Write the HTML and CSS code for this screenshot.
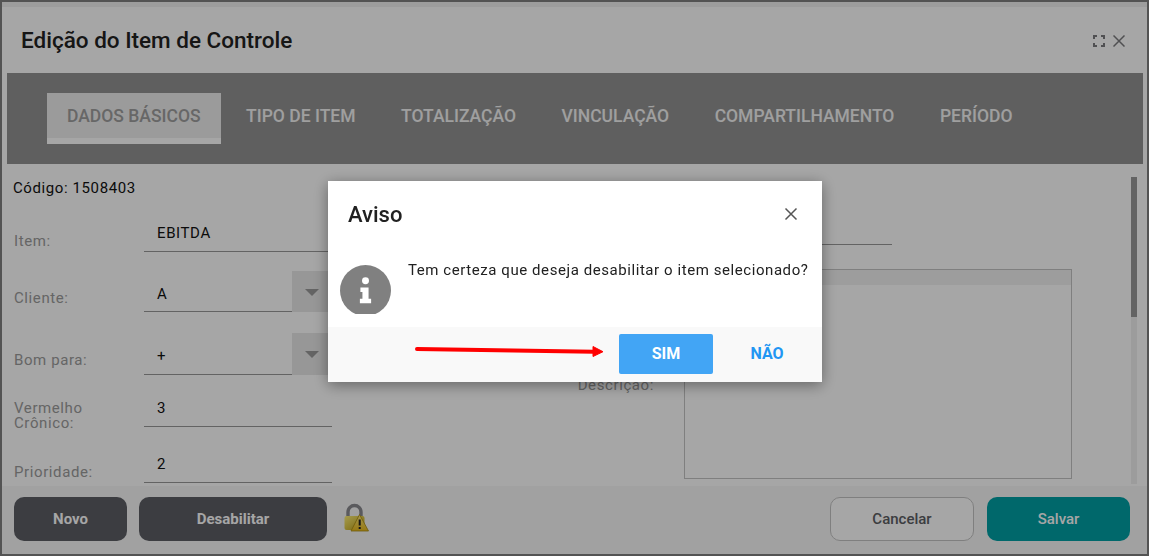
FILE: index.html
```html
<!DOCTYPE html>
<html lang="pt">
<head>
<meta charset="utf-8">
<title>Edição do Item de Controle</title>
<link rel="stylesheet" href="styles.css">
</head>
<body>
<div class="window">
  <header class="win-head">
    <h1 class="win-title">Edição do Item de Controle</h1>
    <div class="win-tools">
      <svg class="tool" width="12" height="12" viewBox="0 0 12 12"><path d="M1 4V1h3M8 1h3v3M11 8v3H8M4 11H1V8" fill="none" stroke="#7b7b7f" stroke-width="2"/></svg>
      <svg class="tool" width="12" height="12" viewBox="0 0 12 12"><path d="M.5.5l11 11M11.500.5l-11 11" fill="none" stroke="#7b7b7f" stroke-width="1.500"/></svg>
    </div>
  </header>
  <nav class="tabs">
    <a class="tab active">DADOS BÁSICOS</a>
    <a class="tab">TIPO DE ITEM</a>
    <a class="tab">TOTALIZAÇÃO</a>
    <a class="tab">VINCULAÇÃO</a>
    <a class="tab">COMPARTILHAMENTO</a>
    <a class="tab">PERÍODO</a>
  </nav>
  <main class="content">
    <div class="form">
      <div class="col-left">
        <div class="code">Código: 1508403</div>
        <div class="row row-item"><label class="lbl">Item:</label><div class="field">EBITDA</div></div>
        <div class="row row-client"><label class="lbl">Cliente:</label><div class="field field-select">A</div><div class="drop"><i class="caret"></i></div></div>
        <div class="row row-good"><label class="lbl">Bom para:</label><div class="field field-select">+</div><div class="drop"><i class="caret"></i></div></div>
        <div class="row row-red"><label class="lbl lbl-two">Vermelho Crônico:</label><div class="field">3</div></div>
        <div class="row row-prio"><label class="lbl">Prioridade:</label><div class="field">2</div></div>
      </div>
      <div class="col-right">
        <div class="field-right"></div>
        <div class="desc-row">
          <label class="lbl lbl-desc">Descrição:</label>
          <div class="editor"><div class="editor-bar"></div></div>
        </div>
      </div>
    </div>
    <div class="scroll"><div class="thumb"></div></div>
  </main>
  <footer class="win-foot">
    <button class="btn btn-dark btn-new">Novo</button>
    <button class="btn btn-dark btn-dis">Desabilitar</button>
    <svg class="lock" width="26" height="30" viewBox="0 0 26 30">
      <defs>
        <linearGradient id="body" x1="0" y1="0" x2="1" y2="1"><stop offset="0" stop-color="#fff07a"/><stop offset="1" stop-color="#b89a10"/></linearGradient>
        <linearGradient id="warn" x1="0" y1="0" x2="0" y2="1"><stop offset="0" stop-color="#ffe97a"/><stop offset="1" stop-color="#e8b91c"/></linearGradient>
      </defs>
      <path d="M5 14V9a6.500 6.500 0 0 1 13 0v5" fill="none" stroke="#8a8a90" stroke-width="3.400"/>
      <rect x="1.500" y="13" width="20" height="14" rx="2" fill="url(#body)"/>
      <path d="M16.500 11.500L25.500 28H8z" fill="url(#warn)" stroke="#a88c10" stroke-width=".8"/>
      <path d="M16.700 16.500v6M16.700 24v2" stroke="#222" stroke-width="2"/>
    </svg>
    <div class="foot-gap"></div>
    <button class="btn btn-ghost">Cancelar</button>
    <button class="btn btn-save">Salvar</button>
  </footer>
</div>

<div class="overlay"></div>

<section class="modal">
  <div class="modal-head">
    <h2 class="modal-title">Aviso</h2>
    <svg width="14" height="14" viewBox="0 0 14 14"><path d="M1.500 1.500l11 11M12.500 1.500l-11 11" fill="none" stroke="#555" stroke-width="1.500"/></svg>
  </div>
  <div class="modal-body">
    <div class="info">
      <svg width="51" height="51" viewBox="0 0 50 50">
        <circle cx="25" cy="25" r="25" fill="#808080"/>
        <circle cx="25" cy="15.500" r="3.400" fill="#fff"/>
        <path d="M20 22h8v11h2.500v4.500h-11V33H22v-6.500h-2z" fill="#fff"/>
      </svg>
    </div>
    <p class="modal-text">Tem certeza que deseja desabilitar o item selecionado?</p>
  </div>
  <div class="modal-foot">
    <button class="m-btn m-yes">SIM</button>
    <button class="m-btn m-no">NÃO</button>
  </div>
</section>

<svg class="arrow" width="192" height="16" viewBox="0 0 192 16">
  <path d="M4 5L181 7.700" stroke="#f00" stroke-width="4" stroke-linecap="round"/>
  <path d="M180 2.500L190 7.700L180 12.500z" fill="#f00" stroke="#f00" stroke-linejoin="round"/>
</svg>
</body>
</html>
```
FILE: styles.css
```css
* { box-sizing: border-box; }
html, body { margin: 0; height: 100%; overflow: hidden; }
body { font-family: Roboto, "Liberation Sans", sans-serif; background: #fff; color: #000; }

.window {
  width: 1149px; height: 556px;
  border: 2px solid #808080;
  display: flex; flex-direction: column;
  background: #fff;
}
.win-head {
  height: 71px;
  display: flex; align-items: center; justify-content: space-between;
  padding: 5px 22px 0 19px;
  background: linear-gradient(#f2f2f2 0, #f2f2f2 5px, #fff 5px);
}
.win-title { margin: 0; font-size: 22.500px; font-weight: 500; color: #222; line-height: 28px; position: relative; top: 0; }
.win-tools { display: flex; gap: 8px; position: relative; top: 1px; }
.tool { display: block; }

.tabs {
  margin: 0 4px 0 5px;
  height: 91px;
  background: #939393;
  display: flex; align-items: flex-start;
  padding: 20px 0 0 40px;
  gap: 5.500px;
}
.tab {
  height: 51px;
  padding: 12px 20px 0;
  font-size: 17.500px; font-weight: 500; line-height: 22px;
  color: #f5f5f5;
}
.tab.active { background: #eee; border-bottom: 6px solid #fff; color: #9e9e9e; }

.content {
  flex: 1; min-height: 0;
  display: flex;
  padding: 0 10px 0 5px;
  overflow: hidden;
}
.form { flex: 1; display: flex; min-width: 0; overflow: hidden; }
.col-left { width: 325px; padding-left: 6px; flex: none; }
.code { font-size: 15px; line-height: 18px; margin-top: 15px; color: #111; letter-spacing: .6px; }
.row { display: flex; position: relative; }
.lbl { width: 130px; margin-left: 1px; flex: none; font-size: 15px; line-height: 16px; color: #9c9c9c; letter-spacing: .6px; }
.lbl-two { padding-right: 40px; line-height: 15px; }
.field {
  flex: 1; border-bottom: 1px solid #999;
  font-size: 15px; line-height: 18px; padding: 0 13px;
  color: #111; letter-spacing: .6px;
}
.field-select { flex: none; width: 148px; }
.drop { width: 40px; background: #e8e8e8; display: flex; justify-content: center; padding-top: 18px; flex: none; }
.caret { width: 0; height: 0; border-left: 7.500px solid transparent; border-right: 7.500px solid transparent; border-top: 7px solid #9a9a9a; }

.row-item { margin-top: 22px; height: 33px; }
.row-item .lbl { padding-top: 14px; }
.row-item .field { padding-top: 5px; }
.row-client { margin-top: 19px; height: 41px; }
.row-client .lbl { padding-top: 19px; }
.row-client .field { padding-top: 14px; }
.row-good { margin-top: 21px; height: 42px; }
.row-good .lbl { padding-top: 19px; }
.row-good .field { padding-top: 14px; }
.row-red { margin-top: 21px; height: 31px; }
.row-red .lbl { padding-top: 4.500px; }
.row-red .field { padding-top: 3px; }
.row-prio { margin-top: 24px; height: 32px; }
.row-prio .lbl { padding-top: 13px; }
.row-prio .field { padding-top: 4px; }

.col-right { flex: 1; position: relative; }
.field-right { width: 325px; margin-left: 235px; height: 81px; border-bottom: 1px solid #999; }
.desc-row { display: flex; margin-top: 24px; margin-left: 214px; }
.lbl-desc { width: 107px; text-align: right; padding-top: 108px; }
.editor { width: 388px; height: 210px; border: 1px solid #c4c4c4; margin-left: 30px; }
.editor-bar { height: 15px; background: #f1f1f1; }

.scroll { width: 6px; flex: none; margin: 13px 0 2px; background: #f0f0f0; }
.thumb { height: 140px; background: #999; }

.win-foot {
  height: 68px; flex: none;
  display: flex; align-items: flex-start;
  padding: 11px 17px 0 12px;
  background: #f8f8f8;
}
.btn {
  height: 44px; border: 0; border-radius: 10px;
  font-family: inherit; font-size: 15px; font-weight: 700;
  color: #fff; padding: 0;
}
.btn-dark { background: #5c5e64; }
.btn-new { width: 113px; margin-right: 12px; }
.btn-dis { width: 188px; margin-right: 16px; }
.lock { margin-top: 6px; flex: none; }
.foot-gap { flex: 1; }
.btn-ghost { width: 144px; background: #fff; border: 1px solid #c4c4c4; color: #5c5e64; margin-right: 13px; font-weight: 500; }
.btn-save { width: 143px; background: #00a0a5; font-weight: 500; }

.overlay { position: fixed; inset: 0; background: rgba(0,0,0,.35); }

.modal {
  position: fixed; left: 328px; top: 181px; width: 494px; height: 201px;
  background: #fff;
  box-shadow: 0 3px 14px rgba(0,0,0,.4);
  display: flex; flex-direction: column;
}
.modal-head { height: 66px; flex: none; display: flex; align-items: center; justify-content: space-between; padding: 0 24px 0 20px; }
.modal-title { margin: 0; font-size: 22px; font-weight: 500; color: #212121; }
.modal-body { flex: 1; display: flex; position: relative; overflow: hidden; padding-left: 12px; }
.info { width: 51px; flex: none; margin-top: 18px; height: 49px; overflow: hidden; }
.info svg { display: block; }
.modal-text { margin: 13px 0 0 17px; font-size: 15px; line-height: 20px; color: #212121; letter-spacing: .57px; white-space: nowrap; }
.modal-foot {
  height: 55px; flex: none; background: #f9f9f9;
  display: flex; align-items: flex-start;
  padding: 7px 0 0 291px;
}
.m-btn { height: 40px; border: 0; border-radius: 2px; font-family: Roboto, sans-serif; font-size: 16px; font-weight: 700; padding: 0 0 1px; background: none; }
.m-yes { width: 94px; background: #42a5f5; color: #fff; }
.m-no { width: 108px; color: #2196f3; }

.arrow { position: fixed; left: 413px; top: 344px; }
```
